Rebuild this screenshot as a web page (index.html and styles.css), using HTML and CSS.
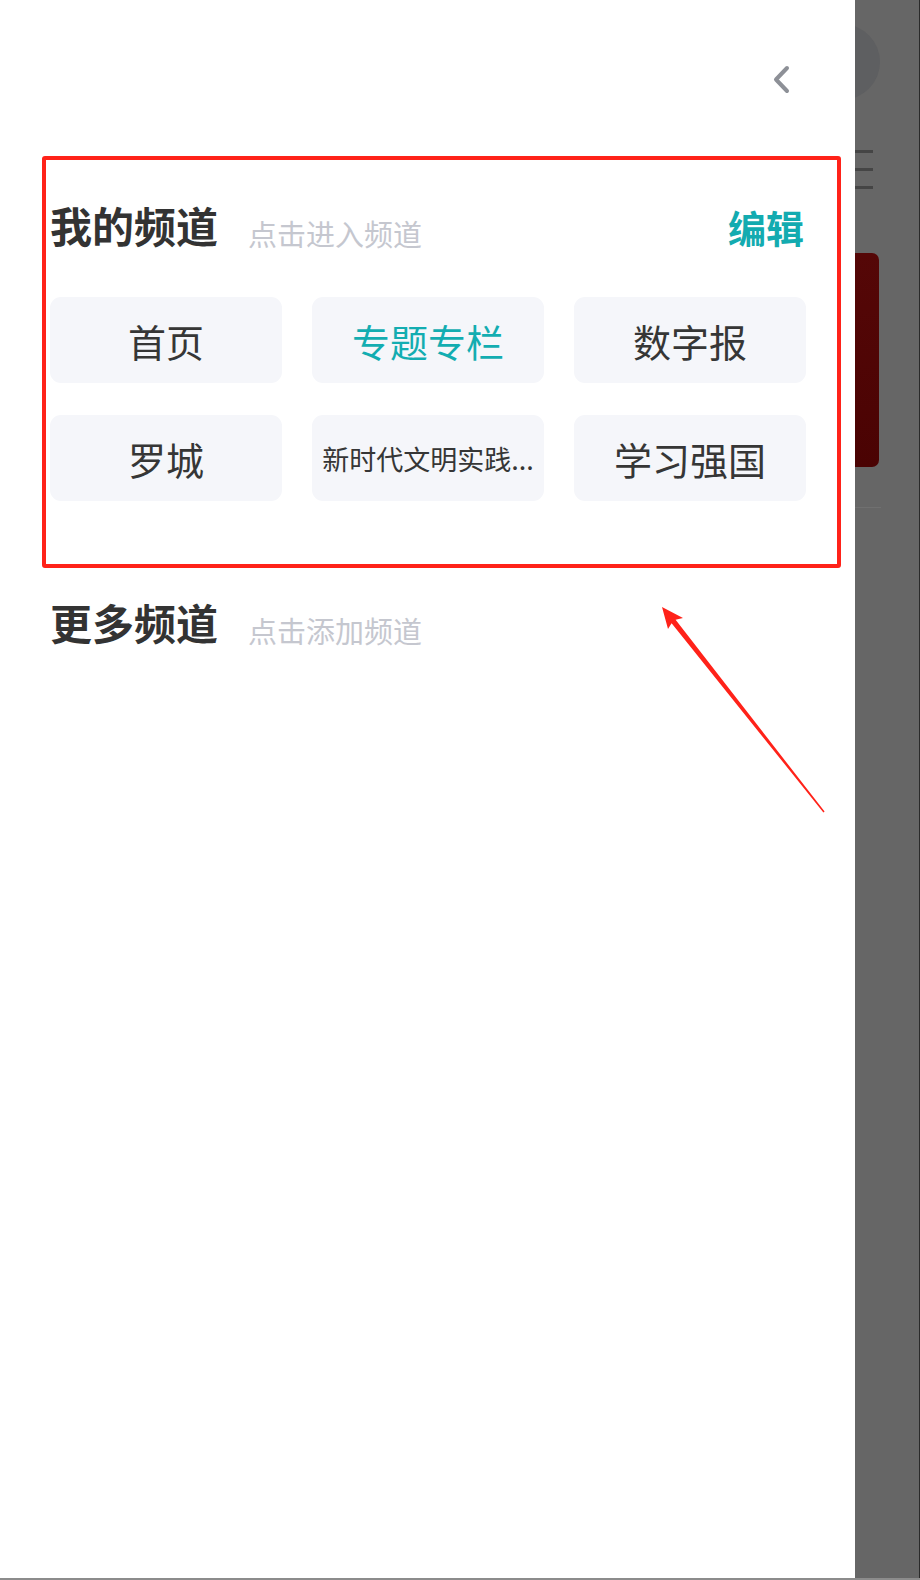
FILE: index.html
```html
<!DOCTYPE html>
<html lang="zh-CN">
<head>
  <meta charset="UTF-8" />
  <meta name="viewport" content="width=device-width, initial-scale=1.0"/>
  <title>频道管理</title>
  <link rel="stylesheet" href="styles.css">
</head>
<body>
  <div class="screen">
    <div class="panel">
      <div class="topbar">
        <svg class="back" width="22" height="30" viewBox="0 0 22 30">
          <polyline points="16,3 5,14.5 16,26" fill="none" stroke="#8d9097" stroke-width="4" stroke-linecap="round" stroke-linejoin="round"/>
        </svg>
      </div>

      <div class="section">
        <div class="section-head">
          <div class="head-left">
            <span class="title">我的频道</span>
            <span class="hint">点击进入频道</span>
          </div>
          <span class="edit">编辑</span>
        </div>
        <div class="channels">
          <div class="channel">首页</div>
          <div class="channel active">专题专栏</div>
          <div class="channel">数字报</div>
          <div class="channel">罗城</div>
          <div class="channel small">新时代文明实践...</div>
          <div class="channel">学习强国</div>
        </div>
      </div>

      <div class="section more">
        <div class="section-head">
          <div class="head-left">
            <span class="title">更多频道</span>
            <span class="hint">点击添加频道</span>
          </div>
        </div>
      </div>
    </div>

    <div class="side">
      <div class="avatar"></div>
      <div class="menu">
        <span></span><span></span><span></span>
      </div>
      <div class="banner"></div>
      <div class="divider"></div>
    </div>
    <div class="edge"></div>

    <!-- annotation -->
    <div class="mark-box"></div>
    <svg class="mark-arrow" width="920" height="1580" viewBox="0 0 920 1580">
      <polygon points="662,607 683,618 675.6,619.8 824.6,811.5 823.4,812.5 671.6,623.2 668,629" fill="#ff2219"/>
    </svg>
  </div>
  <div class="bottom-line"></div>
</body>
</html>
```

FILE: styles.css
```css
body {
  margin: 0;
  font-family: "Noto Sans CJK SC", "Noto Sans", sans-serif;
  background-color: #fff;
  width: 920px;
}

.screen {
  position: relative;
  display: flex;
  height: 1578px;
}

.panel {
  width: 855px;
  background-color: #fff;
  position: relative;
  z-index: 1;
}

.topbar {
  height: 160px;
  display: flex;
  justify-content: flex-end;
  align-items: center;
  padding-right: 62px;
}

.section {
  padding: 40px 49px 0 50px;
}

.section-head {
  display: flex;
  justify-content: space-between;
  align-items: baseline;
  height: 50px;
  line-height: 50px;
}

.head-left {
  display: flex;
  align-items: flex-end;
  gap: 30px;
}

.title {
  font-size: 42px;
  font-weight: 700;
  color: #333;
}

.hint {
  font-size: 29px;
  line-height: 33px;
  color: #c5c7cf;
}

.edit {
  font-size: 38px;
  font-weight: 700;
  color: #13abb0;
  padding-right: 2px;
}

.channels {
  display: grid;
  grid-template-columns: repeat(3, 232px);
  grid-auto-rows: 86px;
  column-gap: 30px;
  row-gap: 32px;
  margin-top: 47px;
}

.channel {
  display: flex;
  align-items: center;
  justify-content: center;
  background-color: #f5f6fa;
  border-radius: 11px;
  font-size: 38px;
  color: #363636;
  white-space: nowrap;
}

.channel.active {
  color: #13adb1;
}

.channel.small {
  font-size: 27px;
}

.section.more {
  padding-top: 96px;
}

.side {
  width: 64px;
  background-color: #666;
  overflow: hidden;
  display: flex;
  flex-direction: column;
}

.avatar {
  width: 76px;
  height: 76px;
  border-radius: 50%;
  background-color: #5e5f61;
  margin: 24px 0 0 -51px;
}

.menu {
  display: flex;
  flex-direction: column;
  gap: 15px;
  margin-top: 50px;
}

.menu span {
  width: 18px;
  height: 3px;
  background-color: #454545;
}

.banner {
  width: 24px;
  height: 214px;
  margin-top: 64px;
  background: linear-gradient(180deg, #550707, #4a0303);
  border-radius: 0 7px 7px 0;
}

.divider {
  width: 26px;
  height: 1px;
  margin-top: 40px;
  background-color: #707070;
}

.edge {
  width: 1px;
  background-color: #2a2a2a;
}

.bottom-line {
  height: 2px;
  background-color: #8c8c8c;
}

.mark-box {
  position: absolute;
  left: 42px;
  top: 156px;
  width: 791px;
  height: 404px;
  border: 4px solid #ff2219;
  border-radius: 3px;
  z-index: 2;
}

.mark-arrow {
  position: absolute;
  left: 0;
  top: 0;
  z-index: 2;
  pointer-events: none;
}
```
